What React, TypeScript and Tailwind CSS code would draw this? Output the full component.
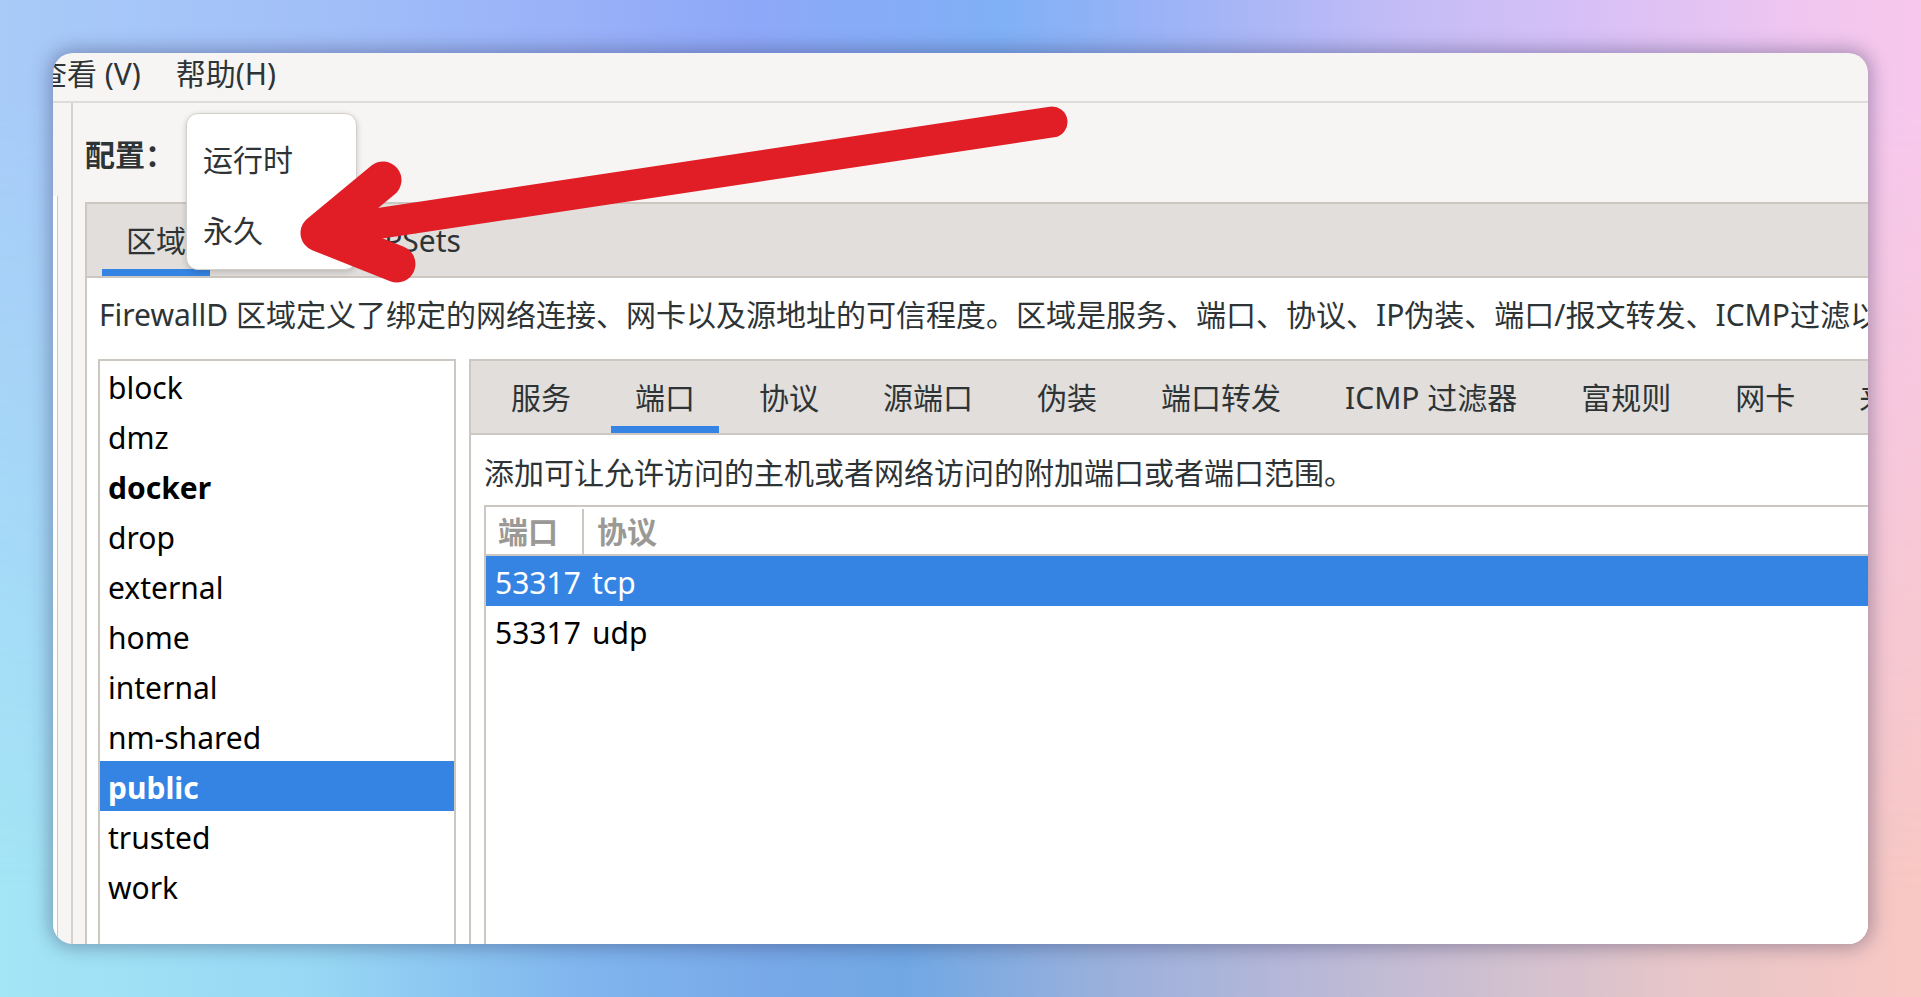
import React from 'react';

const zones = [
  { name: 'block' },
  { name: 'dmz' },
  { name: 'docker', bold: true },
  { name: 'drop' },
  { name: 'external' },
  { name: 'home' },
  { name: 'internal' },
  { name: 'nm-shared' },
  { name: 'public', bold: true, selected: true },
  { name: 'trusted' },
  { name: 'work' },
];

const outerTabs = ['区域', '服务', 'IPSets'];
const innerTabs = ['服务', '端口', '协议', '源端口', '伪装', '端口转发', 'ICMP 过滤器', '富规则', '网卡', '来源'];

const ports = [
  { port: '53317', proto: 'tcp', selected: true },
  { port: '53317', proto: 'udp' },
];

const Tab: React.FC<{ label: string; active?: boolean }> = ({ label, active }) => (
  <div
    className={`mx-[8px] px-[24px] flex items-center whitespace-nowrap text-[#2e3436] ${
      active ? 'border-b-[7px] border-[#3584e4] pt-[7px]' : ''
    }`}
  >
    {label}
  </div>
);

const App: React.FC = () => {
  return (
    <div className="relative w-[1921px] h-[997px] overflow-hidden bg-[linear-gradient(to_right,#a4e6f6_0%,#98d8f4_16%,#80b6ee_30%,#78a8e8_40%,#70a8e4_47%,#98b0dc_57%,#b8b8d8_68%,#d0c0d0_78%,#e8c6c8_88%,#f8c8c4_100%)] font-['Noto_Sans','Noto_Sans_CJK_SC',sans-serif] text-[30px]">
      {/* top half of the wallpaper, faded out downwards */}
      <div className="absolute inset-0 bg-[linear-gradient(to_right,#a8cbf8_0%,#a2c0f8_16%,#98b0f8_31%,#8ea8f8_39%,#80b0f6_52%,#a0b4f6_62%,#c4bcf6_73%,#d8c0f6_83%,#f0c6f0_94%,#f8c8ec_100%)] [mask-image:linear-gradient(to_bottom,black_10%,transparent_90%)]" />

      <div className="relative pt-[53px] pl-[53px]">
        {/* window */}
        <div className="relative w-[1815px] h-[891px] rounded-[20px] overflow-hidden bg-[#f6f5f4] flex flex-col shadow-[0_0_18px_4px_rgba(40,40,80,0.35)]">
          {/* menubar */}
          <div className="h-[50px] shrink-0 border-b-2 border-[#dedbd8] flex items-center pb-[8px] text-[#2e3436]">
            <div className="flex gap-[35px] ml-[-16px] whitespace-nowrap">
              <span>查看 (V)</span>
              <span>帮助(H)</span>
            </div>
          </div>

          <div className="flex-1 flex min-h-0">
            {/* sliver of the left pane */}
            <div className="w-[18px] shrink-0 flex flex-col">
              <div className="h-[93px]" />
              <div className="flex-1 w-[5px] bg-white border-r border-[#cdc7c2]" />
            </div>
            <div className="w-[2px] shrink-0 bg-[#d6d1cc]" />

            {/* main pane */}
            <div className="flex-1 min-w-0 flex flex-col pl-[12px]">
              <div className="h-[99px] shrink-0 flex items-center pt-[4px] font-bold text-[#2e3436]">配置：</div>

              <div className="flex-1 min-h-0 flex flex-col border-l-2 border-t-2 border-[#cdc7c2]">
                <div className="h-[74px] shrink-0 flex items-stretch pl-[7px] bg-[#e1dedb] border-b-2 border-[#cdc7c2]">
                  {outerTabs.map((t, i) => (
                    <Tab key={t} label={t} active={i === 0} />
                  ))}
                </div>

                <div className="flex-1 min-h-0 flex flex-col bg-white pl-[11px]">
                  <div className="h-[81px] shrink-0 pt-[19px] pl-[1px] leading-[36px] whitespace-nowrap text-[#2e3436]">
                    FirewallD 区域定义了绑定的网络连接、网卡以及源地址的可信程度。区域是服务、端口、协议、IP伪装、端口/报文转发、ICMP过滤以及富规则的组合。区域可以绑定到网卡以及源地址。
                  </div>

                  <div className="flex-1 min-h-0 flex">
                    {/* zone list */}
                    <div className="w-[358px] shrink-0 border-2 border-b-0 border-[#cdc7c2] bg-white flex flex-col">
                      {zones.map((z) => (
                        <div
                          key={z.name}
                          className={`h-[50px] shrink-0 px-[8px] pt-[4px] flex items-center leading-none ${
                            z.selected ? 'bg-[#3584e4] text-white' : 'text-black'
                          } ${z.bold ? 'font-bold' : ''}`}
                        >
                          {z.name}
                        </div>
                      ))}
                    </div>

                    <div className="w-[13px] shrink-0" />

                    {/* zone settings notebook */}
                    <div className="flex-1 min-w-0 flex flex-col border-l-2 border-t-2 border-[#cdc7c2]">
                      <div className="h-[74px] shrink-0 flex items-stretch pl-[8px] bg-[#e1dedb] border-b-2 border-[#cdc7c2]">
                        {innerTabs.map((t, i) => (
                          <Tab key={t} label={t} active={i === 1} />
                        ))}
                      </div>

                      <div className="flex-1 min-h-0 flex flex-col bg-white pl-[13px]">
                        <div className="h-[70px] shrink-0 flex items-center pt-[4px] whitespace-nowrap text-[#2e3436]">
                          添加可让允许访问的主机或者网络访问的附加端口或者端口范围。
                        </div>

                        <div className="flex-1 min-h-0 flex flex-col border-l-2 border-t-2 border-[#cdc7c2]">
                          <div className="h-[49px] shrink-0 flex border-b-2 border-[#cdc7c2] pt-[2px] font-bold text-[#9a9996]">
                            <div className="w-[98px] shrink-0 border-r-2 border-[#cdc7c2] pl-[12px] flex items-center">端口</div>
                            <div className="pl-[13px] flex items-center">协议</div>
                          </div>
                          {ports.map((p) => (
                            <div
                              key={p.proto}
                              className={`h-[50px] shrink-0 flex items-center pt-[4px] leading-none ${
                                p.selected ? 'bg-[#3584e4] text-white' : 'text-black'
                              }`}
                            >
                              <div className="w-[98px] shrink-0 pl-[9px]">{p.port}</div>
                              <div className="pl-[8px]">{p.proto}</div>
                            </div>
                          ))}
                        </div>
                      </div>
                    </div>
                  </div>
                </div>
              </div>
            </div>
          </div>

          {/* open combo popup */}
          <div className="absolute left-[133px] top-[60px] w-[171px] h-[157px] rounded-[12px] bg-white border border-[#d3cfcb] shadow-[0_2px_6px_rgba(0,0,0,0.18)] pt-[10px] text-[#2e3436]">
            <div className="h-[71px] flex items-center pl-[16px]">运行时</div>
            <div className="h-[71px] flex items-center pl-[16px]">永久</div>
          </div>
        </div>
      </div>

      {/* annotation arrow */}
      <svg className="absolute inset-0 pointer-events-none" width="1921" height="997" viewBox="0 0 1921 997">
        <line x1="1052" y1="122" x2="322" y2="232" stroke="#e11d26" strokeWidth="31" strokeLinecap="round" />
        <polyline
          points="383,180 319,233 397,264"
          fill="none"
          stroke="#e11d26"
          strokeWidth="37"
          strokeLinecap="round"
          strokeLinejoin="round"
        />
      </svg>
    </div>
  );
};

export default App;
